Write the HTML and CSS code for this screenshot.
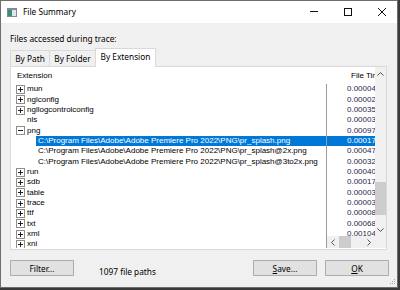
FILE: index.html
```html
<!DOCTYPE html>
<html>
<head>
<meta charset="utf-8">
<link rel="stylesheet" href="styles.css">
</head>
<body>
<div class="window">
  <div class="titlebar">
    <svg class="app-icon" width="10" height="9" viewBox="0 0 10 9"><rect x="0" y="0" width="10" height="9" fill="#7b8c9e"/><rect x="1" y="2" width="8" height="6" fill="#dde7ee"/><rect x="1" y="2" width="4" height="6" fill="#3f8d6c"/></svg>
    <span class="title">File Summary</span>
    <div class="controls">
      <svg width="8" height="8" viewBox="0 0 8 8"><rect x="0" y="3" width="8" height="1" fill="#111"/></svg>
      <svg width="8" height="8" viewBox="0 0 8 8"><rect x="0.5" y="0.5" width="7" height="7" fill="none" stroke="#111" stroke-width="1"/></svg>
      <svg width="8" height="8" viewBox="0 0 8 8"><path d="M0 0L8 8M8 0L0 8" stroke="#111" stroke-width="1"/></svg>
    </div>
  </div>
  <div class="content">
    <div class="caption">Files accessed during trace:</div>
    <div class="tabs">
      <div class="tab tab-path">By Path</div>
      <div class="tab tab-folder">By Folder</div>
      <div class="tab tab-ext active">By Extension</div>
    </div>
    <div class="panel">
      <div class="tree">
        <div class="thead">Extension</div>
        <div class="row"><svg class="box" width="9" height="9" viewBox="0 0 9 9"><rect x="0.5" y="0.5" width="8" height="8" fill="#fff" stroke="#8e8e8e"/><rect x="2" y="4" width="5" height="1" fill="#222"/><rect x="4" y="2" width="1" height="5" fill="#222"/></svg><span class="lbl">mun</span></div>
        <div class="row"><svg class="box" width="9" height="9" viewBox="0 0 9 9"><rect x="0.5" y="0.5" width="8" height="8" fill="#fff" stroke="#8e8e8e"/><rect x="2" y="4" width="5" height="1" fill="#222"/><rect x="4" y="2" width="1" height="5" fill="#222"/></svg><span class="lbl">nglconfig</span></div>
        <div class="row"><svg class="box" width="9" height="9" viewBox="0 0 9 9"><rect x="0.5" y="0.5" width="8" height="8" fill="#fff" stroke="#8e8e8e"/><rect x="2" y="4" width="5" height="1" fill="#222"/><rect x="4" y="2" width="1" height="5" fill="#222"/></svg><span class="lbl">ngllogcontrolconfig</span></div>
        <div class="row"><span class="nobox"></span><span class="lbl">nls</span></div>
        <div class="row"><svg class="box" width="9" height="9" viewBox="0 0 9 9"><rect x="0.5" y="0.5" width="8" height="8" fill="#fff" stroke="#8e8e8e"/><rect x="2" y="4" width="5" height="1" fill="#222"/></svg><span class="lbl">png</span></div>
        <div class="row child"><span class="path selected">C:\Program Files\Adobe\Adobe Premiere Pro 2022\PNG\pr_splash.png</span></div>
        <div class="row child"><span class="path">C:\Program Files\Adobe\Adobe Premiere Pro 2022\PNG\pr_splash@2x.png</span></div>
        <div class="row child"><span class="path">C:\Program Files\Adobe\Adobe Premiere Pro 2022\PNG\pr_splash@3to2x.png</span></div>
        <div class="row"><svg class="box" width="9" height="9" viewBox="0 0 9 9"><rect x="0.5" y="0.5" width="8" height="8" fill="#fff" stroke="#8e8e8e"/><rect x="2" y="4" width="5" height="1" fill="#222"/><rect x="4" y="2" width="1" height="5" fill="#222"/></svg><span class="lbl">run</span></div>
        <div class="row"><svg class="box" width="9" height="9" viewBox="0 0 9 9"><rect x="0.5" y="0.5" width="8" height="8" fill="#fff" stroke="#8e8e8e"/><rect x="2" y="4" width="5" height="1" fill="#222"/><rect x="4" y="2" width="1" height="5" fill="#222"/></svg><span class="lbl">sdb</span></div>
        <div class="row"><svg class="box" width="9" height="9" viewBox="0 0 9 9"><rect x="0.5" y="0.5" width="8" height="8" fill="#fff" stroke="#8e8e8e"/><rect x="2" y="4" width="5" height="1" fill="#222"/><rect x="4" y="2" width="1" height="5" fill="#222"/></svg><span class="lbl">table</span></div>
        <div class="row"><svg class="box" width="9" height="9" viewBox="0 0 9 9"><rect x="0.5" y="0.5" width="8" height="8" fill="#fff" stroke="#8e8e8e"/><rect x="2" y="4" width="5" height="1" fill="#222"/><rect x="4" y="2" width="1" height="5" fill="#222"/></svg><span class="lbl">trace</span></div>
        <div class="row"><svg class="box" width="9" height="9" viewBox="0 0 9 9"><rect x="0.5" y="0.5" width="8" height="8" fill="#fff" stroke="#8e8e8e"/><rect x="2" y="4" width="5" height="1" fill="#222"/><rect x="4" y="2" width="1" height="5" fill="#222"/></svg><span class="lbl">ttf</span></div>
        <div class="row"><svg class="box" width="9" height="9" viewBox="0 0 9 9"><rect x="0.5" y="0.5" width="8" height="8" fill="#fff" stroke="#8e8e8e"/><rect x="2" y="4" width="5" height="1" fill="#222"/><rect x="4" y="2" width="1" height="5" fill="#222"/></svg><span class="lbl">txt</span></div>
        <div class="row"><svg class="box" width="9" height="9" viewBox="0 0 9 9"><rect x="0.5" y="0.5" width="8" height="8" fill="#fff" stroke="#8e8e8e"/><rect x="2" y="4" width="5" height="1" fill="#222"/><rect x="4" y="2" width="1" height="5" fill="#222"/></svg><span class="lbl">xml</span></div>
        <div class="row"><svg class="box" width="9" height="9" viewBox="0 0 9 9"><rect x="0.5" y="0.5" width="8" height="8" fill="#fff" stroke="#8e8e8e"/><rect x="2" y="4" width="5" height="1" fill="#222"/><rect x="4" y="2" width="1" height="5" fill="#222"/></svg><span class="lbl">xni</span></div>
      </div>
      <div class="side">
        <div class="side-main">
          <div class="times">
            <div class="thead-r">File Time</div>
            <div class="tbody">
              <div class="cell">0.00004</div>
              <div class="cell">0.00002</div>
              <div class="cell">0.00035</div>
              <div class="cell">0.00003</div>
              <div class="cell">0.00097</div>
              <div class="cell selected">0.00017</div>
              <div class="cell">0.00047</div>
              <div class="cell">0.00032</div>
              <div class="cell">0.00040</div>
              <div class="cell">0.00017</div>
              <div class="cell">0.00003</div>
              <div class="cell">0.00003</div>
              <div class="cell">0.00008</div>
              <div class="cell">0.00068</div>
              <div class="cell">0.00104</div>
            </div>
          </div>
          <div class="vscroll">
            <div class="arrow"><svg width="7" height="4" viewBox="0 0 7 4"><path d="M0.5 3.5L3.5 0.5L6.5 3.5" fill="none" stroke="#555" stroke-width="1"/></svg></div>
            <div class="track"><div class="vthumb"></div></div>
            <div class="arrow"><svg width="7" height="4" viewBox="0 0 7 4"><path d="M0.5 0.5L3.5 3.5L6.5 0.5" fill="none" stroke="#555" stroke-width="1"/></svg></div>
          </div>
        </div>
        <div class="hrow">
          <div class="hscroll">
            <div class="harrow"><svg width="4" height="7" viewBox="0 0 4 7"><path d="M3.5 0.5L0.5 3.5L3.5 6.5" fill="none" stroke="#555" stroke-width="1"/></svg></div>
            <div class="hthumb"></div>
            <div class="htrack"></div>
            <div class="harrow"><svg width="4" height="7" viewBox="0 0 4 7"><path d="M0.5 0.5L3.5 3.5L0.5 6.5" fill="none" stroke="#555" stroke-width="1"/></svg></div>
          </div>
          <div class="corner"></div>
        </div>
      </div>
    </div>
    <div class="bottom">
      <button class="btn">Filter...</button>
      <span class="count">1097 file paths</span>
      <button class="btn btn-save"><u>S</u>ave...</button>
      <button class="btn btn-ok"><u>O</u>K</button>
    </div>
  </div>
  <svg class="grip" width="7" height="7" viewBox="0 0 7 7"><rect x="5" y="0" width="1" height="1" fill="#a9a9a9"/><rect x="3" y="2" width="1" height="1" fill="#a9a9a9"/><rect x="5" y="2" width="1" height="1" fill="#a9a9a9"/><rect x="1" y="4" width="1" height="1" fill="#a9a9a9"/><rect x="3" y="4" width="1" height="1" fill="#a9a9a9"/><rect x="5" y="4" width="1" height="1" fill="#a9a9a9"/></svg>
</div>
</body>
</html>
```

FILE: styles.css
```css
html, body {
  margin: 0;
  padding: 0;
}
body {
  width: 400px;
  height: 290px;
  overflow: hidden;
  background: #3a3a3a;
  font-family: "Noto Sans", "Liberation Sans", sans-serif;
  font-size: 8.3px;
  color: #000;
}
.window {
  position: relative;
  width: 398px;
  height: 288px;
  box-sizing: border-box;
  border: 1px solid #6e6e6e;
  background: #f0f0f0;
  display: flex;
  flex-direction: column;
}
.titlebar {
  height: 22px;
  flex: none;
  background: #fff;
  display: flex;
  align-items: center;
  padding-left: 6px;
}
.app-icon {
  display: block;
  margin-right: 6px;
}
.title {
  line-height: 12px;
}
.controls {
  margin-left: auto;
  display: flex;
  align-items: center;
  gap: 26px;
  padding-right: 11px;
}
.controls svg {
  display: block;
}
.content {
  flex: 1;
  display: flex;
  flex-direction: column;
  padding: 10px 10px 0 9px;
}
.caption {
  line-height: 12px;
  height: 12px;
}
.tabs {
  margin-top: 3px;
  height: 18px;
  display: flex;
  align-items: flex-end;
}
.tab {
  box-sizing: border-box;
  height: 16px;
  border: 1px solid #d9d9d9;
  border-bottom: none;
  background: #f0f0f0;
  text-align: center;
  padding-top: 1px;
  line-height: 13px;
  white-space: nowrap;
}
.tab-path { width: 40px; }
.tab-folder { width: 47px; margin-left: -1px; }
.tab-ext { width: 61px; margin-left: -1px; }
.tab.active {
  position: relative;
  z-index: 1;
  height: 19px;
  margin-bottom: -1px;
  background: #fff;
  padding-top: 1px;
}
.panel {
  box-sizing: border-box;
  height: 184px;
  flex: none;
  border: 1px solid #d9d9d9;
  background: #fff;
  display: flex;
  padding-bottom: 1px;
}
.tree {
  flex: 1;
  overflow: hidden;
  font-family: "Liberation Sans", Arial, sans-serif;
  font-size: 8px;
}
.thead {
  height: 17.3px;
  line-height: 17.3px;
  padding-left: 6px;
}
.row {
  height: 10.35px;
  display: flex;
  align-items: center;
  white-space: nowrap;
}
.box {
  display: block;
  flex: none;
  margin-left: 5px;
  margin-right: 2px;
}
.nobox {
  width: 9px;
  margin-left: 5px;
  margin-right: 2px;
  flex: none;
}
.lbl {
  line-height: 10.35px;
}
.child {
  padding-left: 25px;
}
.path {
  flex: 1;
  height: 100%;
  line-height: 10.35px;
  padding-left: 2px;
}
.selected {
  background: #0078d7;
  color: #fff;
}
.side {
  width: 60px;
  flex: none;
  display: flex;
  flex-direction: column;
}
.side-main {
  flex: 1;
  display: flex;
  min-height: 0;
}
.times {
  flex: 1;
  display: flex;
  flex-direction: column;
  overflow: hidden;
  font-family: "Liberation Sans", Arial, sans-serif;
  font-size: 8px;
}
.thead-r {
  height: 17.3px;
  flex: none;
  line-height: 17.3px;
  padding-left: 25px;
  white-space: nowrap;
}
.tbody {
  flex: 1;
  border-left: 1px solid #9c9c9c;
  overflow: hidden;
}
.cell {
  height: 10.35px;
  line-height: 10.35px;
  padding-left: 20px;
  white-space: nowrap;
  color: #1e1e4e;
}
.cell.selected {
  color: #fff;
}
.vscroll {
  width: 11px;
  flex: none;
  background: #f0f0f0;
  display: flex;
  flex-direction: column;
}
.arrow {
  height: 13px;
  flex: none;
  display: flex;
  align-items: center;
  justify-content: center;
}
.arrow svg, .harrow svg {
  display: block;
}
.track {
  flex: 1;
}
.vthumb {
  margin-top: 102px;
  height: 33px;
  background: #cdcdcd;
}
.hrow {
  height: 12px;
  flex: none;
  display: flex;
}
.hscroll {
  flex: 1;
  border-left: 1px solid #9c9c9c;
  background: #f0f0f0;
  display: flex;
}
.harrow {
  width: 12px;
  flex: none;
  display: flex;
  align-items: center;
  justify-content: center;
}
.hthumb {
  width: 12px;
  background: #cdcdcd;
}
.htrack {
  flex: 1;
}
.corner {
  width: 11px;
  background: #f0f0f0;
}
.bottom {
  margin-top: 10px;
  margin-right: -2px;
  display: flex;
  align-items: flex-start;
}
.btn {
  box-sizing: border-box;
  width: 64px;
  height: 16px;
  border: 1px solid #adadad;
  background: #e1e1e1;
  font-family: "Noto Sans", "Liberation Sans", sans-serif;
  font-size: 8.3px;
  line-height: 13px;
  padding: 0;
  color: #000;
}
.count {
  margin-left: 25px;
  margin-top: 6px;
  line-height: 12px;
}
.btn-save {
  margin-left: auto;
}
.btn-ok {
  margin-left: 8px;
}
.grip {
  position: absolute;
  right: 1px;
  bottom: 1px;
}
```
